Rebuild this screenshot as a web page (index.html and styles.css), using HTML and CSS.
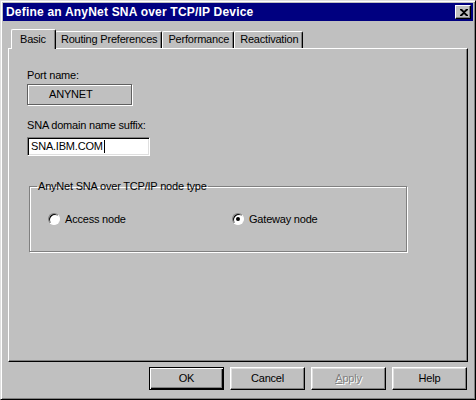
FILE: index.html
```html
<!DOCTYPE html>
<html lang="en">
<head>
  <meta charset="UTF-8" />
  <title>Define an AnyNet SNA over TCP/IP Device</title>
  <link rel="stylesheet" href="styles.css">
</head>
<body>
  <div class="window">
    <!-- Caption bar -->
    <div class="titlebar">
      <span class="title">Define an AnyNet SNA over TCP/IP Device</span>
      <span class="close-btn">
        <svg width="8" height="7" viewBox="0 0 8 7">
          <path d="M0 0h2l2 2 2-2h2v1L5 3.5 8 6v1H6L4 5 2 7H0V6l3-2.5L0 1z" fill="#000"/>
        </svg>
      </span>
    </div>

    <!-- Property sheet tabs -->
    <div class="tabs">
      <div class="tab active">Basic</div>
      <div class="tab">Routing Preferences</div>
      <div class="tab">Performance</div>
      <div class="tab">Reactivation</div>
    </div>

    <div class="panel">
      <label class="field-label">Port name:</label>
      <div class="static-box">ANYNET</div>

      <label class="field-label gap">SNA domain name suffix:</label>
      <div class="text-input">SNA.IBM.COM<span class="caret"></span></div>

      <fieldset class="group">
        <legend>AnyNet SNA over TCP/IP node type</legend>
        <div class="radio-row">
          <label class="radio"><span class="radio-dot"></span>Access node</label>
          <label class="radio"><span class="radio-dot checked"></span>Gateway node</label>
        </div>
      </fieldset>
    </div>

    <!-- Dialog buttons -->
    <div class="buttons">
      <div class="btn default">OK</div>
      <div class="btn">Cancel</div>
      <div class="btn disabled"><u>A</u>pply</div>
      <div class="btn">Help</div>
    </div>
  </div>
</body>
</html>
```

FILE: styles.css
```css
* { box-sizing: border-box; }
body { margin: 0; background: #c0c0c0; font-family: "Liberation Sans", Arial, sans-serif; font-size: 11px; letter-spacing: -0.2px; color: #000; }

.window { width: 476px; height: 400px; background: #c0c0c0; border: 1px solid; border-color: #dfdfdf #000 #000 #dfdfdf; box-shadow: inset 1px 1px #fff, inset -1px -1px #808080; padding: 2px; }

.titlebar { height: 18px; background: #000080; color: #fff; display: flex; align-items: center; justify-content: space-between; padding: 0 2px 0 3px; }
.title { font-weight: bold; font-size: 12px; letter-spacing: 0.2px; }
.close-btn { width: 16px; height: 14px; background: #c0c0c0; border: 1px solid; border-color: #fff #000 #000 #fff; box-shadow: inset -1px -1px #808080; display: flex; align-items: center; justify-content: center; padding-left: 1px; }

.tabs { display: flex; align-items: flex-end; height: 27px; padding-left: 9px; position: relative; z-index: 1; }
.tab { height: 17px; padding: 0 4px 0 5px; line-height: 15px; border: 1px solid; border-bottom: none; border-color: #fff #000 #000 #fff; box-shadow: inset -1px 0 #808080; border-radius: 2px 2px 0 0; background: #c0c0c0; white-space: nowrap; }
.tab.active { height: 20px; padding: 0 9px 0 8px; line-height: 18px; margin: 0 -1px -1px -1px; position: relative; z-index: 2; }

.panel { margin-left: 5px; width: 460px; height: 314px; border: 1px solid; border-color: #fff #000 #000 #fff; box-shadow: inset -1px -1px #808080; padding: 20px 0 0 18px; }

.field-label { display: block; line-height: 13px; }
.field-label.gap { margin-top: 14px; }
.static-box { width: 105px; height: 21px; margin-top: 2px; border: 1px solid #606060; box-shadow: 1px 1px #fff, inset 1px 1px #fff; line-height: 19px; padding-left: 21px; }
.text-input { width: 123px; height: 19px; margin-top: 5px; background: #fff; border: 1px solid; border-color: #808080 #fff #fff #808080; box-shadow: inset 1px 1px #000, inset -1px -1px #dfdfdf; line-height: 17px; padding-left: 3px; display: flex; align-items: center; }
.caret { display: inline-block; width: 1px; height: 13px; background: #000; margin-left: 1px; }

.group { margin: 24px 0 0 2px; min-width: 0; width: 378px; height: 72px; border: 1px solid #808080; box-shadow: 1px 1px #fff, inset 1px 1px #fff; padding: 0 0 0 18px; }
.group legend { padding: 0 1px; margin-left: -11px; line-height: 13px; }
.radio-row { display: flex; margin-top: 20px; }
.radio { display: flex; align-items: center; width: 184px; }
.radio + .radio { width: auto; }
.radio-dot { width: 12px; height: 12px; border-radius: 50%; background: #fff; border: 1px solid; border-color: #808080 #fff #fff #808080; box-shadow: inset 1px 1px #000; margin-right: 5px; display: flex; align-items: center; justify-content: center; }
.radio-dot.checked::after { content: ""; width: 4px; height: 4px; border-radius: 50%; background: #000; }

.buttons { display: flex; justify-content: flex-end; gap: 6px; padding: 5px 6px 0 0; }
.btn { width: 75px; height: 23px; line-height: 21px; text-align: center; border: 1px solid; border-color: #fff #000 #000 #fff; box-shadow: inset -1px -1px #808080, inset 1px 1px #dfdfdf; }
.btn.default { border-color: #000; box-shadow: inset 1px 1px #fff, inset -1px -1px #000, inset -2px -2px #808080; }
.btn.disabled { color: #808080; text-shadow: 1px 1px #fff; }
.btn.disabled u { text-decoration-color: #808080; }
```
